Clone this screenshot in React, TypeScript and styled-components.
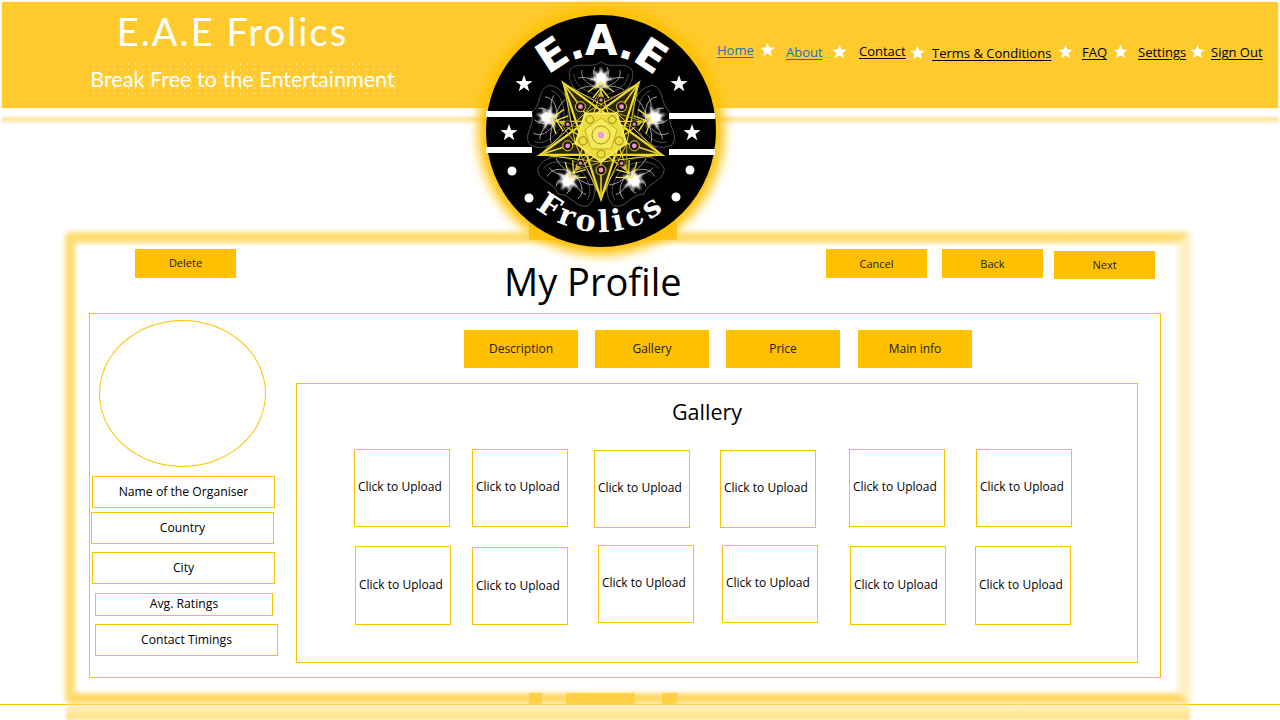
import { Fragment } from "react";
import styled, { createGlobalStyle } from "styled-components";

const GlobalStyle = createGlobalStyle`
html, body {
  margin: 0;
  padding: 0;
  background: #fff;
}
* {
  box-sizing: border-box;
}
`

const Page = styled("div")`
position: relative;
width: 1280px;
height: 720px;
overflow: hidden;
background: #fff;
font-family: "Open Sans", "Liberation Sans", sans-serif;
color: #000;
padding-top: 2px;
`

const Header = styled("header")`
display: flex;
height: 106px;
margin: 0 2px;
background: #ffca2e;
box-shadow: 0 0 2px #ffe08a;
`

const Brand = styled("div")`
width: 715px;
padding-left: 88px;
color: #fff;
font-family: "Lato", sans-serif;
`

const BrandName = styled("div")`
width: 285px;
margin-top: 7px;
font-size: 38px;
font-weight: 400;
line-height: 44px;
letter-spacing: 2.1px;
text-align: center;
white-space: nowrap;
`

const BrandLine = styled("div")`
width: 305px;
margin-top: 8px;
padding: 3px 0;
font-size: 21.6px;
line-height: 30px;
white-space: nowrap;
text-align: center;
background-image: radial-gradient(circle, #ffe49a 0.7px, transparent 1px);
background-size: 7px 6px;
`

const Nav = styled("nav")`
display: flex;
align-items: flex-start;
`

const NavLink = styled("a")<{ $active?: boolean; $top: number; $width: number }>`
display: block;
width: ${(p) => p.$width}px;
margin-top: ${(p) => p.$top}px;
font-size: 13px;
line-height: 18px;
white-space: nowrap;
text-decoration: underline;
text-underline-offset: 2px;
color: ${(p) => (p.$active ? "#1b70bd" : "#000")};
`

const NavStar = styled("svg")<{ $top: number; $left: number; $right: number }>`
flex: none;
width: 15px;
height: 15px;
margin: ${(p) => p.$top}px ${(p) => p.$right}px 0 ${(p) => p.$left}px;
fill: #fff;
`

const HeaderGlow = styled("div")`
height: 6px;
margin: 9px 2px 0;
background: linear-gradient(#ffdf85, #fff3cf);
filter: blur(1px);
`

const Logo = styled("div")`
position: absolute;
z-index: 3;
left: 486px;
top: 15px;
width: 230px;
height: 232px;
border-radius: 50%;
background: #000;
box-shadow: 0 0 12px 8px #ffc000;
`

const LogoBase = styled("div")`
position: absolute;
z-index: 2;
left: 529px;
top: 222px;
width: 148px;
height: 18px;
background: #ffc62a;
`

const Frame = styled("main")`
position: relative;
width: 1118px;
height: 470px;
margin: 111px 0 0 66px;
padding-top: 15px;
&::before {
  content: "";
  position: absolute;
  inset: -2px -7px 0 -1px;
  border-style: solid;
  border-width: 11px 13px 11px 10px;
  border-color: #ffdc70 #fff0c4 #ffd866 #ffdc70;
  border-radius: 6px;
  filter: blur(2.5px);
}
`

const FramePatch = styled("div")<{ $left: number; $width: number }>`
position: absolute;
left: ${(p) => p.$left}px;
bottom: 0;
width: ${(p) => p.$width}px;
height: 11px;
background: #ffcf45;
`

const TopRow = styled("div")`
position: relative;
display: flex;
align-items: flex-start;
height: 64px;
`

const ActionButton = styled("button")<{ $left: number; $top?: number; $height?: number; $lift?: number }>`
flex: none;
width: 101px;
height: ${(p) => p.$height ?? 29}px;
margin: ${(p) => p.$top ?? 0}px 0 0 ${(p) => p.$left}px;
padding: 0 0 ${(p) => p.$lift ?? 0}px;
border: 0;
background: #ffc000;
color: #1c1c1c;
font-family: inherit;
font-size: 11px;
`

const Title = styled("h1")`
flex: none;
width: 177px;
margin: 8px 0 0 268px;
font-size: 38px;
font-weight: 400;
line-height: 48px;
white-space: nowrap;
`

const Panel = styled("section")`
position: relative;
display: flex;
width: 1072px;
height: 365px;
margin-left: 23px;
border: 1px solid #ffc000;
`

const Side = styled("aside")`
flex: none;
width: 206px;
padding-top: 6px;
`

const Avatar = styled("div")`
width: 167px;
height: 147px;
margin: 0 0 9px 9px;
border: 1px solid #ffc000;
border-radius: 50%;
`

const Field = styled("div")<{ $left: number; $top: number; $width: number; $height: number }>`
display: flex;
align-items: center;
justify-content: center;
width: ${(p) => p.$width}px;
height: ${(p) => p.$height}px;
margin: ${(p) => p.$top}px 0 0 ${(p) => p.$left}px;
padding-bottom: 2px;
border: 1px solid #ffc000;
font-size: 12.2px;
`

const Content = styled("div")`
flex: 1;
padding-top: 16px;
`

const Tabs = styled("div")`
display: flex;
margin: 0 0 15px 168px;
`

const Tab = styled("button")<{ $left: number }>`
width: 114px;
height: 38px;
margin-left: ${(p) => p.$left}px;
padding: 0 0 2px;
border: 0;
background: #ffc000;
color: #1c1c1c;
font-family: inherit;
font-size: 12px;
`

const GalleryBox = styled("div")`
width: 842px;
height: 280px;
border: 1px solid #ffc000;
`

const GalleryTitle = styled("h2")`
height: 65px;
margin: 0;
padding: 14px 20px 0 0;
font-size: 21.5px;
font-weight: 400;
line-height: 28px;
text-align: center;
`

const TileRow = styled("div")`
display: flex;
align-items: flex-start;
height: 96px;
`

const Tile = styled("div")<{ $left: number; $top: number; $height: number; $lift: number }>`
display: flex;
align-items: center;
flex: none;
width: 96px;
height: ${(p) => p.$height}px;
margin: ${(p) => p.$top}px 0 0 ${(p) => p.$left}px;
padding: 0 0 ${(p) => p.$lift}px 3px;
border: 1px solid #ffc000;
font-size: 12px;
white-space: nowrap;
`

const FooterRule = styled("div")`
position: relative;
height: 1px;
background: #ffc000;
`

const FooterGlow = styled("div")`
width: 1124px;
height: 15px;
margin-left: 66px;
background: linear-gradient(#fff0c4, #ffe592 70%, #ffe592);
filter: blur(1.5px);
`

const navItems = [
  { label: "Home", active: true, top: 39, width: 37, star: { top: 40, left: 6, right: 11 } },
  { label: "About", active: true, top: 41, width: 38, star: { top: 42, left: 8, right: 12 } },
  { label: "Contact", top: 40, width: 47, star: { top: 43, left: 4, right: 7 } },
  { label: "Terms & Conditions", top: 42, width: 120, star: { top: 42, left: 6, right: 9 } },
  { label: "FAQ", top: 41, width: 27, star: { top: 42, left: 4, right: 10 } },
  { label: "Settings", top: 41, width: 50, star: { top: 42, left: 2, right: 6 } },
  { label: "Sign Out", top: 41, width: 51 },
];

const fields = [
  { label: "Name of the Organiser", left: 2, top: 0, width: 183, height: 32 },
  { label: "Country", left: 1, top: 4, width: 183, height: 32 },
  { label: "City", left: 2, top: 8, width: 183, height: 32 },
  { label: "Avg. Ratings", left: 5, top: 9, width: 178, height: 23 },
  { label: "Contact Timings", left: 5, top: 8, width: 183, height: 32 },
];

const tabs = [
  { label: "Description", left: 0 },
  { label: "Gallery", left: 17 },
  { label: "Price", left: 17 },
  { label: "Main info", left: 18 },
];

const tileRows = [
  [
    { left: 57, top: 0, height: 78, lift: 4 },
    { left: 22, top: 0, height: 78, lift: 4 },
    { left: 26, top: 1, height: 78, lift: 4 },
    { left: 30, top: 1, height: 78, lift: 4 },
    { left: 33, top: 0, height: 78, lift: 4 },
    { left: 31, top: 0, height: 78, lift: 4 },
  ],
  [
    { left: 58, top: 1, height: 79, lift: 2 },
    { left: 21, top: 2, height: 78, lift: 2 },
    { left: 30, top: 0, height: 78, lift: 4 },
    { left: 28, top: 0, height: 78, lift: 4 },
    { left: 32, top: 1, height: 79, lift: 2 },
    { left: 29, top: 1, height: 79, lift: 2 },
  ],
];

const starPoints = (cx: number, cy: number, r: number) =>
  Array.from({ length: 10 }, (_, i) => {
    const radius = i % 2 === 0 ? r : r * 0.4;
    const a = (-90 + i * 36) * (Math.PI / 180);
    return `${(cx + radius * Math.cos(a)).toFixed(1)},${(cy + radius * Math.sin(a)).toFixed(1)}`;
  }).join(" ");

const polar = (r: number, deg: number) => {
  const a = (deg * Math.PI) / 180;
  return { x: 601 + r * Math.cos(a), y: 135 + r * Math.sin(a) };
};

const pts = (list: { x: number; y: number }[]) =>
  list.map((p) => `${p.x.toFixed(1)},${p.y.toFixed(1)}`).join(" ");

const fiveTurns = [0, 72, 144, 216, 288];
const downAngles = [90, 162, 234, 306, 18];
const upAngles = [270, 342, 54, 126, 198];

const Mandala = () => {
  const tips = downAngles.map((d) => polar(64, d));
  const star = [0, 2, 4, 1, 3].map((i) => tips[i]);
  const inner = upAngles.map((d) => polar(44, d));
  const innerStar = [0, 2, 4, 1, 3].map((i) => inner[i]);
  const pent = downAngles.map((d) => polar(27, d));
  const pentIn = upAngles.map((d) => polar(17, d));
  const bigDots = downAngles.map((d) => polar(35, d));
  const smallDots = upAngles.map((d) => polar(35, d));
  return (
    <g>
      <filter id="soft">
        <feGaussianBlur stdDeviation="0.8" />
      </filter>
      {fiveTurns.map((t) => (
        <g key={t} transform={`rotate(${t} 601 135)`}>
          <g fill="none" stroke="#5c5c5c" strokeWidth="0.8">
            <path d="M601 102 C580 98 566 84 570 70 C578 60 590 70 601 62 C612 70 624 60 632 70 C636 84 622 98 601 102Z" />
            <path d="M601 96 C584 92 574 84 574 74 M601 96 C618 92 628 84 628 74" />
            <path d="M601 100 C590 96 578 96 572 86 M601 100 C612 96 624 96 630 86" />
          </g>
          <g fill="none" stroke="#b4b4b4" strokeWidth="0.8">
            <path d="M601 88 C590 86 580 80 582 70 M601 88 C612 86 622 80 620 70 M601 90 C594 80 592 74 595 67 M601 90 C608 80 610 74 607 67" />
            <path d="M601 82 C592 80 586 76 578 78 M601 82 C610 80 616 76 624 78 M601 86 C592 86 584 86 578 90 M601 86 C610 86 618 86 624 90" />
          </g>
          <path
            d="M601 67 L603.5 74 L609 70 L606 77 L614 79 L606 81 L608 90 L601 85 L594 90 L596 81 L588 79 L596 77 L593 70 L598.5 74Z"
            fill="#fff"
            filter="url(#soft)"
          />
          <ellipse cx="601" cy="78" rx="4.5" ry="5.5" fill="#fff" />
          <g stroke="#f4e23c" strokeWidth="1.3" fill="none">
            <path d="M601 82 L588 92 M601 82 L614 92 M601 86 L601 98 M601 88 L593 98 M601 88 L609 98" />
          </g>
        </g>
      ))}
      <polygon points={pts(star)} fill="#2b2605" stroke="#f1dc32" strokeWidth="2.2" />
      <polygon points={pts(innerStar)} fill="none" stroke="#e6d02c" strokeWidth="1.3" />
      {tips.map((p, i) => (
        <g key={i} stroke="#e3cf2e" strokeWidth="1">
          <line x1={p.x} y1={p.y} x2={pent[(i + 1) % 5].x} y2={pent[(i + 1) % 5].y} />
          <line x1={p.x} y1={p.y} x2={pent[(i + 4) % 5].x} y2={pent[(i + 4) % 5].y} />
          <line x1={p.x} y1={p.y} x2="601" y2="135" strokeWidth="1.6" />
        </g>
      ))}
      {inner.map((p, i) => (
        <g key={i} stroke="#c9b520" strokeWidth="0.9">
          <line x1={p.x} y1={p.y} x2={pent[i].x} y2={pent[i].y} />
          <line x1={p.x} y1={p.y} x2={pent[(i + 2) % 5].x} y2={pent[(i + 2) % 5].y} />
        </g>
      ))}
      <polygon points={pts(pent)} fill="#efdd42" stroke="#fbef6a" strokeWidth="1.5" />
      <polygon points={pts(pentIn)} fill="#f6e95a" stroke="#b9a61c" strokeWidth="0.8" />
      <g fill="none" stroke="#9b8a14" strokeWidth="0.9">
        {fiveTurns.map((t) => (
          <circle key={t} cx="601" cy="116" r="4" transform={`rotate(${t + 36} 601 135)`} />
        ))}
        <circle cx="601" cy="135" r="9" />
      </g>
      <circle cx="601" cy="135" r="4" fill="#f09ad0" stroke="#fff7a0" strokeWidth="1.2" />
      {bigDots.map((p, i) => (
        <g key={i}>
          <circle cx={p.x} cy={p.y} r="5" fill="#1a1604" stroke="#e9d533" strokeWidth="1" />
          <circle cx={p.x} cy={p.y} r="2.4" fill="#ee8fd0" />
        </g>
      ))}
      {smallDots.map((p, i) => (
        <g key={i}>
          <circle cx={p.x} cy={p.y} r="3.2" fill="#1a1604" />
          <circle cx={p.x} cy={p.y} r="1.7" fill="#e884c8" />
        </g>
      ))}
    </g>
  );
};

const LogoArt = () => (
  <svg width="230" height="232" viewBox="486 15 230 232" role="img" aria-label="E.A.E Frolics">
    <defs>
      <path id="logoTop" d="M 525 131 A 76 76 0 0 1 677 131" />
      <path id="logoBottom" d="M 500 131 A 101 101 0 0 0 702 131" />
    </defs>
    <Mandala />
    <text fill="#fff" fontFamily="DejaVu Sans" fontWeight="700" fontSize="42" letterSpacing="-1.5" textAnchor="middle">
      <textPath href="#logoTop" startOffset="50%">E.A.E</textPath>
    </text>
    <text fill="#fff" fontFamily="DejaVu Serif" fontWeight="700" fontSize="30" letterSpacing="4" textAnchor="middle">
      <textPath href="#logoBottom" startOffset="50%">Frolics</textPath>
    </text>
    <g fill="#fff">
      <polygon points={starPoints(524, 84, 9)} />
      <polygon points={starPoints(679, 84, 9)} />
      <polygon points={starPoints(509, 133, 9)} />
      <polygon points={starPoints(692, 133, 9)} />
      <rect x="486" y="111" width="46" height="6" />
      <rect x="486" y="147" width="46" height="6" />
      <rect x="669" y="113" width="46" height="6" />
      <rect x="669" y="149" width="46" height="6" />
      <circle cx="512" cy="171" r="4.5" />
      <circle cx="690" cy="170" r="4.5" />
      <circle cx="529" cy="198" r="4.5" />
      <circle cx="676" cy="197" r="4.5" />
    </g>
  </svg>
);

const App = () => {
  return (
    <Page>
      <GlobalStyle />
      <Header>
        <Brand>
          <BrandName>E.A.E Frolics</BrandName>
          <BrandLine>Break Free to the Entertainment</BrandLine>
        </Brand>
        <Nav>
          {navItems.map((item) => (
            <Fragment key={item.label}>
              <NavLink href="#" $active={item.active} $top={item.top} $width={item.width}>
                {item.label}
              </NavLink>
              {item.star && (
                <NavStar viewBox="0 0 20 20" $top={item.star.top} $left={item.star.left} $right={item.star.right}>
                  <polygon points="10,1 12.6,7.2 19.4,7.7 14.2,12.1 15.8,18.8 10,15.2 4.2,18.8 5.8,12.1 0.6,7.7 7.4,7.2" />
                </NavStar>
              )}
            </Fragment>
          ))}
        </Nav>
      </Header>
      <HeaderGlow />
      <LogoBase />
      <Logo>
        <LogoArt />
      </Logo>
      <Frame>
        <FramePatch $left={463} $width={13} />
        <FramePatch $left={500} $width={69} />
        <FramePatch $left={596} $width={15} />
        <TopRow>
          <ActionButton $left={69} $lift={2}>Delete</ActionButton>
          <Title>My Profile</Title>
          <ActionButton $left={145}>Cancel</ActionButton>
          <ActionButton $left={15}>Back</ActionButton>
          <ActionButton $left={11} $top={2} $height={28} $lift={2}>Next</ActionButton>
        </TopRow>
        <Panel>
          <Side>
            <Avatar />
            {fields.map((f) => (
              <Field key={f.label} $left={f.left} $top={f.top} $width={f.width} $height={f.height}>
                {f.label}
              </Field>
            ))}
          </Side>
          <Content>
            <Tabs>
              {tabs.map((t) => (
                <Tab key={t.label} $left={t.left}>{t.label}</Tab>
              ))}
            </Tabs>
            <GalleryBox>
              <GalleryTitle>Gallery</GalleryTitle>
              {tileRows.map((row, r) => (
                <TileRow key={r}>
                  {row.map((tile, i) => (
                    <Tile key={i} $left={tile.left} $top={tile.top} $height={tile.height} $lift={tile.lift}>
                      Click to Upload
                    </Tile>
                  ))}
                </TileRow>
              ))}
            </GalleryBox>
          </Content>
        </Panel>
      </Frame>
      <FooterRule />
      <FooterGlow />
    </Page>
  );
};

export default App;
